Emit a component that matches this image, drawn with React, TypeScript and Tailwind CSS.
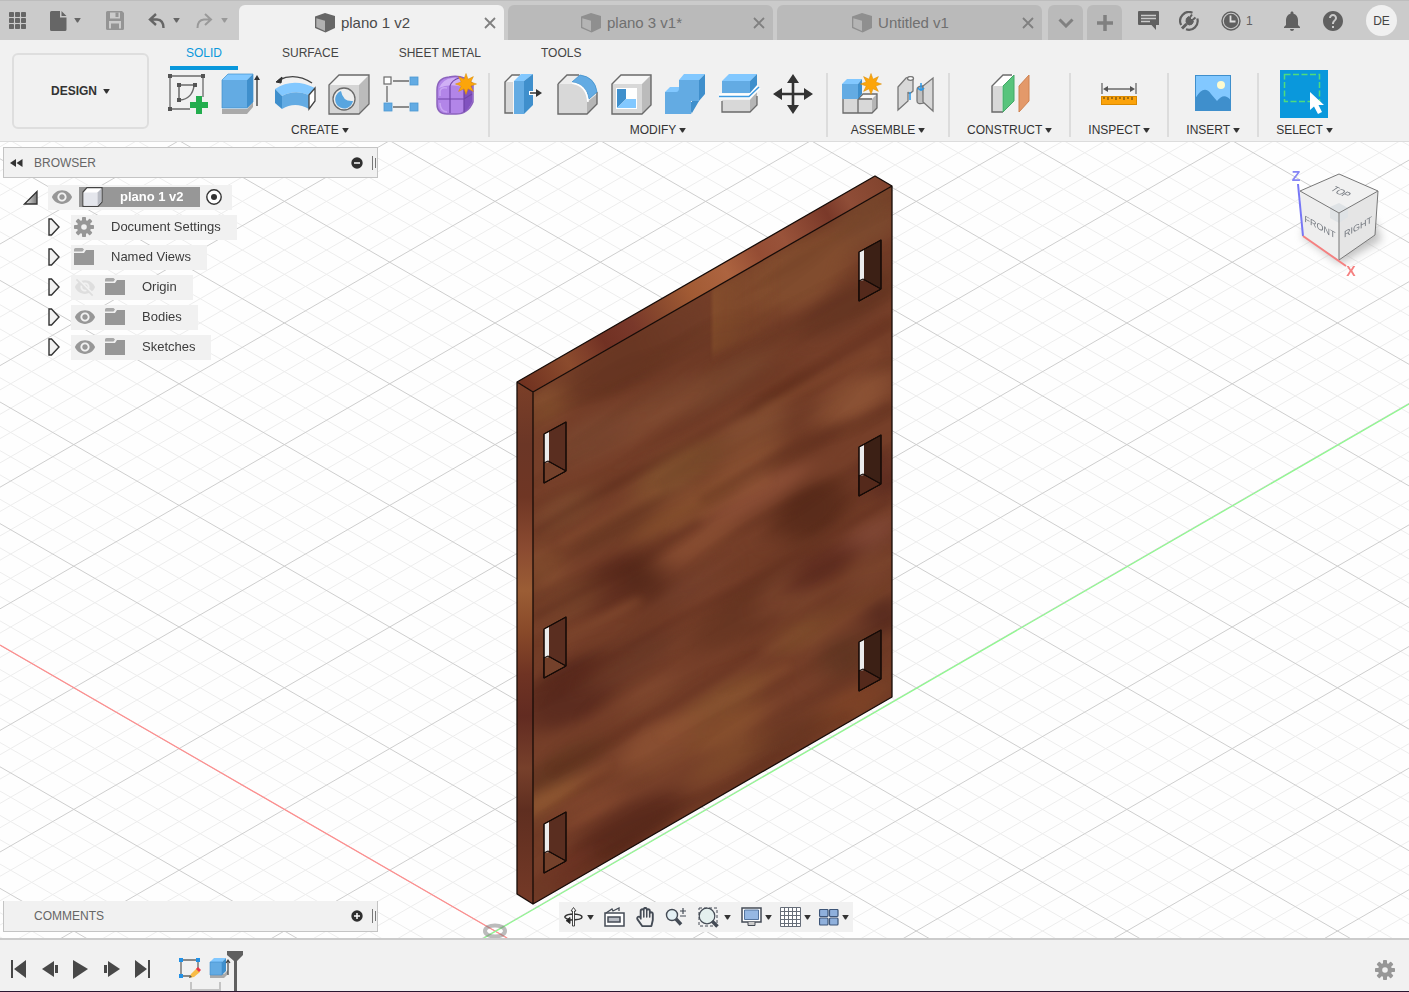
import React from "react";
import { MdHelp, MdNotifications, MdVisibility, MdVisibilityOff } from "react-icons/md";
import { FaRegHandPaper } from "react-icons/fa";

type Kids = { children: React.ReactNode };

function Caret({ className = "text-[#333]" }: { className?: string }) {
  return (
    <svg width="7" height="5" viewBox="0 0 8 6" className={className} aria-hidden="true">
      <path d="M0 0H8L4.6 5.4H3.4Z" fill="currentColor" />
    </svg>
  );
}

/* ---------- Title bar ---------- */

function DocCube({ active }: { active: boolean }) {
  const dark = active ? "#666" : "#8f8f8f";
  const light = active ? "#b0b0b0" : "#b4b4b4";
  return (
    <svg width="20" height="20" viewBox="0 0 20 20" aria-hidden="true">
      <path d="M0 3.500 10 0l10 3v12l-9.500 4.500L0 15Z" fill={dark} />
      <path d="M1.300 5.200 10 7.800V18L1.300 13.900Z" fill={light} />
    </svg>
  );
}

function DocTab({ name, active = false }: { name: string; active?: boolean }) {
  return (
    <div
      className={
        active
          ? "relative flex h-[35px] min-w-0 max-w-[265px] flex-1 items-center justify-center rounded-t-md bg-[#f1f1f1] pr-[18px] text-[#4a4a4a]"
          : "relative flex h-[35px] min-w-0 max-w-[265px] flex-1 items-center justify-center rounded-t-md bg-[#bababa] pr-[18px] text-[#707070]"
      }
    >
      <button className="flex items-center gap-1.5 text-[15px] leading-5 whitespace-nowrap">
        <DocCube active={active} />
        {name}
      </button>
      <button aria-label={"Close " + name} className="absolute right-2 flex h-5 w-3 items-center justify-center text-[#808080]">
        <svg width="12" height="12" viewBox="0 0 12 12" aria-hidden="true">
          <path d="M1 1 11 11M11 1 1 11" stroke="currentColor" strokeWidth="1.800" />
        </svg>
      </button>
    </div>
  );
}

function TitleBar() {
  return (
    <header className="flex h-10 shrink-0 items-end border-t border-[#bdbdbd] bg-[#cbcbcb]">
      <div className="flex h-full w-[239px] shrink-0 items-center pl-2 text-[#666]">
        <button aria-label="Data panel">
          <svg width="20" height="20" viewBox="0 0 20 20" aria-hidden="true" fill="currentColor">
            {[1, 7, 13].map((x) => [1, 7, 13].map((y) => <rect key={x + "-" + y} x={x} y={y} width="5" height="5" rx=".8" />))}
          </svg>
        </button>
        <button aria-label="File" className="ml-5 flex items-center gap-1.5">
          <svg width="20" height="20" viewBox="0 0 20 20" aria-hidden="true" fill="currentColor">
            <path d="M2 1.500Q2 0 3.500 0H12V6.500H18.500V18.500Q18.500 20 17 20H3.500Q2 20 2 18.500ZM13.500 0 18.500 5H13.500Z" />
          </svg>
          <Caret className="text-[#666]" />
        </button>
        <button aria-label="Save" className="ml-[25px] text-[#949494]">
          <svg width="18" height="19" viewBox="0 0 18 19" aria-hidden="true" fill="currentColor">
            <path fillRule="evenodd" d="M1.500 0H16L18 2V17.500Q18 19 16.500 19H1.500Q0 19 0 17.500V1.500Q0 0 1.500 0ZM4 1.500V7.500H14V1.500ZM3 10V17.500H5V12.500H13V17.500H15V10Z" />
            <rect x="9.500" y="1.500" width="3" height="4.500" />
            <rect x="6" y="14" width="2.500" height="3.500" />
          </svg>
        </button>
        <button aria-label="Undo" className="ml-6 flex items-center gap-2">
          <svg width="17" height="16" viewBox="0 0 17 16" aria-hidden="true">
            <path d="M8 1 2 6.500 8 12M2 6.500H9Q15.500 7 15.500 15" fill="none" stroke="currentColor" strokeWidth="2.400" />
          </svg>
          <Caret className="text-[#666]" />
        </button>
        <button aria-label="Redo" className="ml-4 flex items-center gap-2 text-[#999]">
          <svg width="17" height="16" viewBox="0 0 17 16" aria-hidden="true">
            <path d="M9 1 15 6.500 9 12M15 6.500H8Q1.500 7 1.500 15" fill="none" stroke="currentColor" strokeWidth="2" />
          </svg>
          <Caret className="text-[#999]" />
        </button>
      </div>
      <nav className="flex min-w-0 flex-1 items-end gap-1" aria-label="Documents">
        <DocTab name="plano 1 v2" active />
        <DocTab name="plano 3 v1*" />
        <DocTab name="Untitled v1" />
        <button aria-label="All documents" className="ml-0.5 flex h-[35px] w-[35px] shrink-0 items-center justify-center rounded-t-md bg-[#bababa] text-[#808080]">
          <svg width="16" height="10" viewBox="0 0 16 10" aria-hidden="true">
            <path d="M1.500 1.500 8 8 14.500 1.500" fill="none" stroke="currentColor" strokeWidth="3" />
          </svg>
        </button>
        <button aria-label="New design" className="flex h-[35px] w-[35px] shrink-0 items-center justify-center rounded-t-md bg-[#bababa] text-[#808080]">
          <svg width="16" height="16" viewBox="0 0 16 16" aria-hidden="true">
            <path d="M8 0V16M0 8H16" stroke="currentColor" strokeWidth="3.500" />
          </svg>
        </button>
      </nav>
      <div className="flex h-full w-[285px] shrink-0 items-center pr-3 pl-3.5 text-[#606060]">
        <button aria-label="Comments">
          <svg width="21" height="19" viewBox="0 0 21 19" aria-hidden="true">
            <path d="M1 0H20Q21 0 21 1V14H18V19L13.500 14H1Q0 14 0 13V1Q0 0 1 0Z" fill="currentColor" />
            <path d="M3 4.500H18M3 7.500H18M3 10.500H12" stroke="#cbcbcb" strokeWidth="1.300" />
          </svg>
        </button>
        <button aria-label="Extensions" className="ml-5">
          <svg width="20" height="20" viewBox="0 0 20 20" aria-hidden="true" fill="none" stroke="currentColor">
            <path d="M13.500 1.800A8.800 8.800 0 0 0 2.200 14M18.300 7.500A8.800 8.800 0 0 1 7 18.300" strokeWidth="2.200" />
            <path d="M3 17.500 7.500 13" strokeWidth="3" />
            <path d="M7 10.500Q6.500 7 9.500 5.500L14.500 10.500Q13.500 14 10.500 14Q7 13.500 7 10.500Z" fill="currentColor" strokeWidth="1" />
            <path d="M10.500 7 13 3.500M13 9.500 16.500 6.500" strokeWidth="2" />
          </svg>
        </button>
        <button aria-label="Job status, 1" className="ml-[22px] flex items-center gap-[5px] text-xs">
          <svg width="20" height="20" viewBox="0 0 20 20" aria-hidden="true">
            <circle cx="10" cy="10" r="9" fill="none" stroke="currentColor" strokeWidth="1.400" />
            <circle cx="10" cy="10" r="7.200" fill="currentColor" />
            <path d="M9.500 4.500V10.500H14.500" fill="none" stroke="#e0e0e0" strokeWidth="1.800" />
          </svg>
          1
        </button>
        <button aria-label="Notifications" className="ml-[27px]">
          <MdNotifications size={24} />
        </button>
        <button aria-label="Help" className="ml-[17px]">
          <MdHelp size={24} />
        </button>
        <button aria-label="Account DE" className="ml-auto flex h-[31px] w-[31px] items-center justify-center rounded-full bg-[#f0f0f0] text-xs text-[#444]">
          DE
        </button>
      </div>
    </header>
  );
}

/* ---------- Ribbon icons ---------- */

function Ico({ children }: Kids) {
  return (
    <svg width="40" height="40" viewBox="0 0 40 40" className="overflow-visible" aria-hidden="true">
      {children}
    </svg>
  );
}

function Burst({ x, y }: { x: number; y: number }) {
  const pts = Array.from({ length: 16 }, (_, i) => {
    const r = i % 2 ? 5.2 : 10.5;
    const a = (i * Math.PI) / 8;
    return (x + r * Math.sin(a)).toFixed(1) + "," + (y - r * Math.cos(a)).toFixed(1);
  }).join(" ");
  return <polygon points={pts} fill="#fca50a" stroke="#d98a00" strokeWidth=".5" />;
}

const B = "#63abe3";
const BL = "#82c8ff";
const BD = "#3f8fcc";
const G = "#d8d8d8";
const GE = "#6a6a6a";

const SketchIcon = () => (
  <Ico>
    <path d="M5 4V34M7 2H37M38 4V23M7 35H25" stroke={GE} strokeWidth="1.300" />
    <path d="M14 13V24M16 11H28M29 12Q27 25 15 26" fill="none" stroke={GE} strokeWidth="1.500" />
    <g fill="#555">
      {[[3, 0], [36, 0], [3, 33], [12, 9], [28, 9], [12, 24]].map(([x, y]) => (
        <rect key={x + "," + y} x={x} y={y} width="4" height="4" />
      ))}
    </g>
    <path d="M31 22H37V28H43V34H37V40H31V34H25V28H31Z" fill="#23ad4e" />
  </Ico>
);
const ExtrudeIcon = () => (
  <Ico>
    <path d="M3 35H28L34 28V33L28 40H3Z" fill="#aaa" />
    <path d="M3 6 9 0H34L28 6Z" fill={BL} />
    <path d="M28 6 34 0V28L28 34Z" fill={BD} />
    <path d="M3 6H28V34H3Z" fill={B} />
    <path d="M3 6 9 0H34V28L28 34H3Z" fill="none" stroke={BD} strokeWidth=".7" />
    <path d="M38 4V32" stroke="#333" strokeWidth="1.300" />
    <path d="M38 1 41 6H35Z" fill="#333" />
  </Ico>
);
const RevolveIcon = () => (
  <Ico>
    <path d="M6 6Q22-2 39 9" fill="none" stroke="#444" strokeWidth="1.400" />
    <path d="M3 8 9 3 8 9Z" fill="#333" stroke="#333" />
    <path d="M2 15Q20 3 42 14L36 21Q22 15 9 22Z" fill={BL} />
    <path d="M2 15 9 22V35L2 29Z" fill={BD} />
    <path d="M9 22Q22 15 36 21V35Q22 27 9 35Z" fill={B} />
    <path d="M36 21 42 14V27L36 35Z" fill="#fff" stroke="#444" strokeWidth="1.300" />
  </Ico>
);
const HoleIcon = () => (
  <Ico>
    <path d="M2 11 12 1H42L32 11Z" fill="#f6f6f6" />
    <path d="M32 11 42 1V30L32 40Z" fill="#bbb" />
    <path d="M2 11H32V40H2Z" fill="#d5d5d5" />
    <path d="M2 11 12 1H42V30L32 40H2Z" fill="none" stroke={GE} strokeWidth="1.300" />
    <circle cx="17" cy="25" r="11" fill="#eee" stroke={GE} strokeWidth="1.300" />
    <path d="M14 17A9 9 0 1 0 26 27Q16 28 14 17Z" fill="#58a5df" />
  </Ico>
);
const PatternIcon = () => (
  <Ico>
    <path d="M12 7H28M6 12V28M12 33H28" stroke={GE} strokeWidth="1.300" />
    <rect x="3" y="3" width="7" height="7" fill="#fff" stroke={GE} strokeWidth="1.200" />
    <g fill={B} stroke="#4c98d3" strokeWidth=".8">
      <rect x="29" y="3" width="8" height="8" />
      <rect x="3" y="29" width="8" height="8" />
      <rect x="29" y="29" width="8" height="8" />
    </g>
  </Ico>
);
const FormIcon = () => (
  <Ico>
    <path d="M2 16Q2 4 14 3Q28 0 38 10V28Q33 40 21 40H12Q2 40 2 30Z" fill="#b285e8" stroke="#8c63bd" strokeWidth="1.500" />
    <path d="M4 14Q8 5 17 4Q28 3 30 8L28 13Q14 9 4 14Z" fill="#d0b0f5" />
    <path d="M29 14 37 10V28Q34 35 29 38Z" fill="#8152bf" />
    <path d="M15 12V39M3 25H29L37 20M15 12Q17 6 24 4M29 14V38" fill="none" stroke="#7145a8" strokeWidth="1.200" />
    <path d="M5 29Q5 37 12 38M5 22V17Q6 13 12 14" fill="none" stroke="#c8a5f2" strokeWidth="1.500" />
    <Burst x={31} y={10} />
  </Ico>
);
const PressPullIcon = () => (
  <Ico>
    <path d="M2 8 9 1H18V39H2Z" fill="#f7f7f7" />
    <path d="M2 8H10V39H2Z" fill={G} />
    <path d="M10 39H2V8L9 1H17" fill="none" stroke={GE} strokeWidth="1.400" />
    <path d="M11 7 18 0H30L21 7Z" fill={BL} />
    <path d="M21 7 30 0V31L21 40Z" fill={BD} />
    <path d="M11 7H21V40H11Z" fill={B} />
    <path d="M26 19H34" stroke="#fff" strokeWidth="4" />
    <path d="M27 19H35" stroke="#333" strokeWidth="1.500" />
    <path d="M33 15 39 19 33 23Z" fill="#333" />
  </Ico>
);
const FilletIcon = () => (
  <Ico>
    <path d="M1 10 10 1H22L40 20V30L30 40H1Z" fill="#ededed" />
    <path d="M1 10H15Q29 12 30 28V40H1Z" fill={G} />
    <path d="M30 28 40 20V30L30 40Z" fill="#b5b5b5" />
    <path d="M1 10 10 1H22M1 10V40H30L40 30V18" fill="none" stroke={GE} strokeWidth="1.400" />
    <path d="M15 8 23 1Q38 3 40 18L32 25Q30 10 15 8Z" fill={B} stroke={BD} strokeWidth=".8" />
    <path d="M15 9Q30 11 31 28" fill="none" stroke="#fff" strokeWidth="1.500" />
  </Ico>
);
const ShellIcon = () => (
  <Ico>
    <path d="M1 10 10 1H40L31 10Z" fill="#f7f7f7" />
    <path d="M31 10 40 1V31L31 40Z" fill="#bbb" />
    <path d="M1 10H31V40H1Z" fill={G} />
    <path d="M1 10 10 1H40V31L31 40H1Z" fill="none" stroke={GE} strokeWidth="1.400" />
    <rect x="5" y="14" width="21" height="21" fill="#fff" />
    <path d="M6 15H15V25L6 34Z" fill={BD} />
    <path d="M6 34 15 25H25V34Z" fill={BL} />
  </Ico>
);
const CombineIcon = () => (
  <Ico>
    <path d="M0 18 5 13H14V6L19 0H40L34 6L27 18Z" fill={BL} />
    <path d="M34 6 40 0V20L34 27ZM27 27H34L27 39Z" fill={BD} />
    <path d="M0 18H11Q14 18 14 14V6H34V27H26V40H0Z" fill={B} />
    <path d="M26 28 34 27 28 31V35L26 40Z" fill={BD} />
  </Ico>
);
const SplitIcon = () => (
  <Ico>
    <path d="M3 26H31L38 18V31L31 38H3Z" fill={G} />
    <path d="M31 26 38 18V31L31 38Z" fill="#b5b5b5" />
    <path d="M3 27V38H31L38 31V22" fill="none" stroke={GE} strokeWidth="1.300" />
    <path d="M0 22H30L40 13" fill="none" stroke="#fff" strokeWidth="5" />
    <path d="M0 22.500H30L40 13" fill="none" stroke="#3f9ae0" strokeWidth="1.500" />
    <path d="M3 7 10 0H38L31 7Z" fill={BL} />
    <path d="M31 7 38 0V11L31 19Z" fill={BD} />
    <path d="M3 7H31V19H3Z" fill={B} />
  </Ico>
);
const MoveIcon = () => (
  <Ico>
    <path d="M20 5V35M5 20H35" stroke="#333" strokeWidth="2.600" />
    <path d="M20 0 26 9H14ZM20 40 26 31H14ZM0 20 9 14V26ZM40 20 31 14V26Z" fill="#333" />
  </Ico>
);
const ComponentIcon = () => (
  <Ico>
    <path d="M17 25 22 20H36L31 25Z" fill="#f7f7f7" />
    <path d="M31 25 36 20V34L31 39Z" fill="#b5b5b5" />
    <path d="M2 24H31V39H2Z" fill={G} />
    <path d="M2 24V39H31L36 34V20H22L17 25V39M17 25H31" fill="none" stroke={GE} strokeWidth="1.300" />
    <path d="M1 10 6 5H21L17 10Z" fill={BL} />
    <path d="M17 10 21 5V20L17 25Z" fill={BD} />
    <path d="M1 10H17V25H1Z" fill={B} />
    <Burst x={30} y={10} />
  </Ico>
);
const JointIcon = () => (
  <Ico>
    <g stroke="#777" strokeWidth="1.300">
      <path d="M3 13 11 4 14 3Q19 2 18 6V17Q14 21 13 18V27L3 36Z" fill={G} />
      <ellipse cx="15.500" cy="4.500" rx="3" ry="1.800" fill="#fff" />
      <path d="M28 12Q22 12 22 16V27Q22 31 29 29Z" fill="#c0c0c0" />
      <path d="M28 12V28L38 37V4Z" fill={G} />
    </g>
    <path d="M15 18V26M26 9V17M23 14Q26 18 29 14" fill="none" stroke="#2b98e8" strokeWidth="1.500" />
  </Ico>
);
const PlaneIcon = () => (
  <Ico>
    <path d="M2 12 13 0H24L13 12V38H2Z" fill="#fff" />
    <path d="M2 12H12V38H2Z" fill={G} />
    <path d="M13 38H2V12L13 1H22" fill="none" stroke={GE} strokeWidth="1.400" />
    <path d="M13 12 24 1V27L13 38Z" fill="#58c47c" stroke="#42a866" />
    <path d="M29 12 39 1V27L29 38Z" fill="#e3996a" stroke="#cf8250" />
  </Ico>
);
const MeasureIcon = () => (
  <Ico>
    <path d="M3 9V20M37 9V20M6 15H34" stroke={GE} strokeWidth="1.300" />
    <path d="M4 15 9 12V18ZM36 15 31 12V18Z" fill="#555" />
    <rect x="2.500" y="22.500" width="35" height="8" fill="#fba30b" stroke="#db8a00" />
    {[5, 9, 13, 17, 21, 25, 29, 33].map((x, i) => (
      <path key={x} d={i % 2 ? "M" + x + " 23V26" : "M" + x + " 23V25"} stroke="#6b4a12" strokeWidth="1.200" />
    ))}
  </Ico>
);
const ImageIcon = () => (
  <Ico>
    <rect x="2.500" y="1.500" width="35" height="35" fill="#82c8ff" />
    <path d="M2.500 24Q11 10 18 20L24 27Q31 18 37.500 26V36.500H2.500Z" fill={BD} />
    <circle cx="28" cy="11" r="4" fill="#fdfbcf" />
    <rect x="2.500" y="1.500" width="35" height="35" fill="none" stroke="#3f8fcc" />
  </Ico>
);

function Tool({ label, children }: Kids & { label: string }) {
  return (
    <button aria-label={label} className="flex h-10 w-10 items-center justify-center">
      {children}
    </button>
  );
}

const GROUP_STYLE = {
  wide: "flex h-16 flex-col items-center border-r-2 border-[#dcdcdc] px-[13px]",
  single: "flex h-16 flex-col items-center border-r-2 border-[#dcdcdc] px-[17px]",
  last: "flex h-16 flex-col items-center px-[17px]",
};

function Group({ label, children, kind = "wide" }: Kids & { label: string; kind?: "wide" | "single" | "last" }) {
  return (
    <section className={GROUP_STYLE[kind]}>
      <div className="-mt-[3px] flex h-12 shrink-0 items-center gap-3.5">{children}</div>
      <button className="mt-0.5 flex h-5 shrink-0 items-center gap-[3px] text-xs leading-5 whitespace-nowrap text-[#333]">
        {label}
        <Caret />
      </button>
    </section>
  );
}

function Ribbon() {
  return (
    <div className="flex h-[102px] shrink-0 border-b border-[#dcdcdc] bg-[#f1f1f1]">
      <button className="mt-[13px] mr-[3px] ml-3 flex h-[76px] w-[137px] shrink-0 items-center justify-center gap-1.5 rounded-md border-2 border-[#dedede] text-xs font-bold text-[#333]">
        DESIGN
        <Caret />
      </button>
      <div className="flex min-w-0 flex-1 flex-col">
        <nav className="flex h-[30px] gap-7 pl-[18px] text-xs text-[#444]" aria-label="Workspace tabs">
          <button className="border-b-4 border-[#0a98dc] px-4 text-[#0a98dc]">SOLID</button>
          <button className="border-b-4 border-transparent px-4">SURFACE</button>
          <button className="border-b-4 border-transparent px-4">SHEET METAL</button>
          <button className="border-b-4 border-transparent px-4">TOOLS</button>
        </nav>
        <div className="flex pt-[3px]">
          <Group label="CREATE">
            <Tool label="Create sketch"><SketchIcon /></Tool>
            <Tool label="Extrude"><ExtrudeIcon /></Tool>
            <Tool label="Revolve"><RevolveIcon /></Tool>
            <Tool label="Hole"><HoleIcon /></Tool>
            <Tool label="Pattern"><PatternIcon /></Tool>
            <Tool label="Create form"><FormIcon /></Tool>
          </Group>
          <Group label="MODIFY">
            <Tool label="Press pull"><PressPullIcon /></Tool>
            <Tool label="Fillet"><FilletIcon /></Tool>
            <Tool label="Shell"><ShellIcon /></Tool>
            <Tool label="Combine"><CombineIcon /></Tool>
            <Tool label="Split body"><SplitIcon /></Tool>
            <Tool label="Move"><MoveIcon /></Tool>
          </Group>
          <Group label="ASSEMBLE">
            <Tool label="New component"><ComponentIcon /></Tool>
            <Tool label="Joint"><JointIcon /></Tool>
          </Group>
          <Group label="CONSTRUCT" kind="single">
            <Tool label="Offset plane"><PlaneIcon /></Tool>
          </Group>
          <Group label="INSPECT" kind="single">
            <Tool label="Measure"><MeasureIcon /></Tool>
          </Group>
          <Group label="INSERT" kind="single">
            <Tool label="Insert image"><ImageIcon /></Tool>
          </Group>
          <Group label="SELECT" kind="last">
            <button aria-label="Window selection" className="h-12 w-12 bg-[#0a98dc]">
              <svg width="48" height="48" viewBox="0 0 48 48" aria-hidden="true">
                <rect x="4.500" y="4.500" width="35" height="27" fill="none" stroke="#4fdc7c" strokeWidth="1.500" strokeDasharray="6 2.500" />
                <path d="M30 22V40L34 36.500 38 44 42 42 38.500 35H44Z" fill="#fff" />
              </svg>
            </button>
          </Group>
        </div>
      </div>
    </div>
  );
}

/* ---------- Model scene ---------- */

const ORIGIN = { x: 495, y: 931 };
const SLOPE = 0.5774;
const STEP = 24.32;

function Grid() {
  const minor: string[] = [];
  const major: string[] = [];
  for (let k = -75; k <= 75; k++) {
    for (const s of [-1, 1]) {
      const y0 = ORIGIN.y + k * STEP - s * SLOPE * ORIGIN.x;
      const d = "M0 " + y0.toFixed(1) + "L1409 " + (y0 + s * SLOPE * 1409).toFixed(1);
      (k % 5 === 0 ? major : minor).push(d);
    }
  }
  return (
    <g fill="none">
      <path d={minor.join("")} stroke="#ededed" />
      <path d={major.join("")} stroke="#cecece" />
    </g>
  );
}

/* cx, cy, rx, ry, colour */
const GRAIN: [number, number, number, number, string][] = [
  [627, 360, 70, 26, "#683622"], [685, 322, 30, 30, "#6f3c27"], [800, 272, 60, 32, "#834e2f"],
  [867, 215, 34, 30, "#7c4a2f"], [850, 305, 60, 20, "#683724"], [745, 352, 60, 8, "#6c3a25"],
  [720, 385, 60, 14, "#7c4930"], [852, 400, 44, 20, "#8d5335"], [753, 427, 36, 22, "#8a5335"],
  [777, 393, 44, 6, "#66341f"], [650, 413, 70, 18, "#804a31"], [590, 440, 44, 20, "#7a4730"],
  [545, 405, 24, 18, "#85502f"], [677, 470, 50, 20, "#80502e"], [750, 463, 40, 24, "#8b5233"],
  [805, 447, 44, 12, "#693622"], [812, 510, 44, 24, "#582a1a"], [884, 475, 16, 26, "#5d2b21"],
  [757, 495, 60, 11, "#8c4f36"], [683, 510, 60, 13, "#8a5230"], [617, 527, 54, 12, "#6a3a24"],
  [567, 510, 34, 16, "#7f4d31"], [873, 536, 28, 16, "#804735"], [697, 543, 48, 12, "#874c31"],
  [612, 583, 44, 22, "#5e2c1e"], [645, 580, 20, 24, "#54281a"], [690, 588, 34, 16, "#79432d"],
  [570, 602, 36, 18, "#76422a"], [542, 568, 18, 24, "#875131"], [747, 612, 64, 24, "#683622"],
  [792, 590, 36, 22, "#7d472f"], [822, 566, 38, 16, "#602e20"], [872, 572, 30, 14, "#7f4830"],
  [884, 615, 20, 18, "#53281d"], [845, 655, 26, 20, "#613622"], [806, 632, 36, 14, "#824f2d"],
  [850, 608, 44, 8, "#7d472b"], [570, 692, 56, 30, "#5a2a1e"], [630, 660, 50, 18, "#6d3b28"],
  [650, 695, 32, 14, "#80482f"], [720, 702, 56, 14, "#83502d"], [660, 747, 46, 24, "#8b5032"],
  [728, 728, 44, 14, "#87502d"], [845, 710, 48, 16, "#7f4528"], [785, 740, 48, 14, "#6a3824"],
  [545, 800, 44, 11, "#8c5530"], [590, 806, 40, 12, "#884b31"], [622, 832, 70, 22, "#5c2b1d"],
  [728, 758, 44, 12, "#7e492a"], [565, 765, 48, 14, "#683b23"], [570, 870, 30, 18, "#733927"],
];

const HOLES: [number, number][] = [
  [544, 434], [544, 629], [544, 824], [859, 252], [859, 447], [859, 642],
];

function Board() {
  return (
    <g strokeLinejoin="round">
      <defs>
        <clipPath id="face">
          <path d="M533 392 892 186V697L533 904Z" />
        </clipPath>
        <filter id="soft" x="-30%" y="-30%" width="160%" height="160%" colorInterpolationFilters="sRGB">
          <feGaussianBlur stdDeviation="14 6" />
        </filter>
        <filter id="streak" x="-10%" y="-10%" width="120%" height="120%" colorInterpolationFilters="sRGB">
          <feGaussianBlur stdDeviation="4" />
        </filter>
        <filter id="fibre" x="0" y="0" width="100%" height="100%" colorInterpolationFilters="sRGB">
          <feTurbulence type="fractalNoise" baseFrequency=".006 .04" numOctaves="2" seed="7" />
          <feColorMatrix values="0 0 0 0 .22  0 0 0 0 .09  0 0 0 0 .05  2.4 0 0 0 -1" />
        </filter>
        <linearGradient id="topEdge" gradientUnits="userSpaceOnUse" x1="525" y1="387" x2="884" y2="180">
          <stop offset="0" stopColor="#713220" />
          <stop offset=".12" stopColor="#8b4b2d" />
          <stop offset=".17" stopColor="#803f2a" />
          <stop offset=".22" stopColor="#713123" />
          <stop offset=".3" stopColor="#79382a" />
          <stop offset=".38" stopColor="#8a4a2e" />
          <stop offset=".46" stopColor="#a25b34" />
          <stop offset=".56" stopColor="#ad6440" />
          <stop offset=".65" stopColor="#954d34" />
          <stop offset=".72" stopColor="#99533a" />
          <stop offset=".84" stopColor="#7a3929" />
          <stop offset=".9" stopColor="#8f4d37" />
          <stop offset="1" stopColor="#82442e" />
        </linearGradient>
        <linearGradient id="sideEdge" gradientUnits="userSpaceOnUse" x1="517" y1="382" x2="527" y2="904">
          <stop offset="0" stopColor="#7b3f28" />
          <stop offset=".12" stopColor="#6b3626" />
          <stop offset=".22" stopColor="#6f3624" />
          <stop offset=".32" stopColor="#8b4b31" />
          <stop offset=".4" stopColor="#9b5d35" />
          <stop offset=".48" stopColor="#884929" />
          <stop offset=".56" stopColor="#6f3323" />
          <stop offset=".64" stopColor="#622b21" />
          <stop offset=".74" stopColor="#77402b" />
          <stop offset=".82" stopColor="#5f2e20" />
          <stop offset="1" stopColor="#753a27" />
        </linearGradient>
        <linearGradient id="patch" x1="0" y1="0" x2="1" y2="0">
          <stop offset="0" stopColor="#88522e" stopOpacity=".8" />
          <stop offset="1" stopColor="#85502e" stopOpacity="0" />
        </linearGradient>
        <filter id="seam" x="-10%" y="-10%" width="120%" height="120%" colorInterpolationFilters="sRGB">
          <feGaussianBlur stdDeviation="1.5 4" />
        </filter>
      </defs>
      <path d="M533 392 892 186V697L533 904Z" fill="#763f29" />
      <g clipPath="url(#face)">
        <g transform="rotate(-29)">
          <g filter="url(#soft)">
            {GRAIN.map(([x, y, rx, ry, c], i) => (
              <ellipse key={i} rx={rx} ry={ry} fill={c} opacity=".9" transform={"rotate(29) translate(" + x + " " + y + ") rotate(-31)"} />
            ))}
          </g>
        </g>
        <path d="M712 288 780 249V325L712 355Z" fill="url(#patch)" filter="url(#seam)" />
        <g filter="url(#streak)" fill="none" strokeWidth="5" opacity=".5">
          <path d="M533 532 640 470 780 392 892 322M533 618 620 572 700 520M533 702 640 640 770 570 892 500M550 772 660 712 760 650" stroke="#552619" />
          <path d="M700 500 790 450 892 404M600 850 720 790 850 715" stroke="#5c2c1c" />
          <path d="M560 545 660 488M760 410 880 350M660 735 790 665M535 805 610 765M670 530 770 480M560 640 640 600" stroke="#955a36" />
        </g>
        <g transform="translate(712 545) rotate(-30)">
          <rect x="-420" y="-420" width="840" height="840" filter="url(#fibre)" opacity=".14" />
        </g>
      </g>
      <path d="M517 382 875 176 892 186 533 392Z" fill="url(#topEdge)" />
      <path d="M517 382 533 392V904L517 894Z" fill="url(#sideEdge)" />
      <g fill="none" stroke="#160b07" strokeWidth="1.300">
        <path d="M517 382 875 176 892 186V697L533 904 517 894ZM517 382 533 392 892 186M533 392V904" />
      </g>
      {HOLES.map(([x, y]) => (
        <g key={x + "-" + y} transform={"translate(" + x + " " + y + ")"} stroke="#160b07">
          <path d="M0 0 22-12V37L0 49Z" fill={x > 700 ? "#3c2015" : "#5a2e20"} />
          <path d="M0 49V28L4 27 22 37Z" fill={x > 700 ? "#54291b" : "#74412b"} />
          <path d="M.5 0 5-2V28L.5 29Z" fill="#ececec" stroke="none" />
          <path d="M0 0 22-12V37L0 49ZM4 27 22 37M0 29 4 27" fill="none" strokeWidth="1.200" />
        </g>
      ))}
    </g>
  );
}

function Scene() {
  return (
    <svg
      className="absolute inset-0 h-full w-full bg-[#fefefe]"
      viewBox="0 142 1409 796"
      preserveAspectRatio="xMidYMid slice"
      role="img"
      aria-label="Wooden panel model"
    >
      <Grid />
      <path d="M0 645 507 938" stroke="#ff8d8d" strokeWidth="1.200" />
      <path d="M484 938 1409 404" stroke="#8dfa8d" strokeWidth="1.200" />
      <ellipse cx="495" cy="931" rx="10" ry="5.500" fill="none" stroke="#777" strokeOpacity=".5" strokeWidth="4" />
      <Board />
    </svg>
  );
}

function ViewCube() {
  return (
    <svg width="110" height="120" viewBox="1285 162 110 120" className="mt-5 mr-3.5" role="img" aria-label="View cube">
      <defs>
        <filter id="cubeShadow" x="-30%" y="-30%" width="160%" height="160%">
          <feGaussianBlur stdDeviation="4" />
        </filter>
      </defs>
      <path d="M1302 236 1340 264 1382 240 1374 220 1310 220Z" fill="#888" opacity=".5" filter="url(#cubeShadow)" />
      <path d="M1300 191 1339 174 1378 191 1339 213Z" fill="#f1f1f1" />
      <path d="M1300 191 1339 213V260L1303 236Z" fill="#eeeeee" />
      <path d="M1339 213 1378 191 1375 235 1339 260Z" fill="#e5e5e5" />
      <path d="M1330 207 1339 203 1348 208V217L1339 223 1330 218Z" fill="#dfe3e6" />
      <g fill="none" stroke="#777">
        <path d="M1300 191 1339 174 1378 191 1375 235 1339 260V213M1300 191 1339 213 1378 191" />
      </g>
      <g fontFamily="Liberation Sans, sans-serif" fill="#70757c" textAnchor="middle">
        <text transform="translate(1338 194) rotate(25) skewX(-30)" fontSize="9">TOP</text>
        <text transform="translate(1320 230) skewY(29)" fontSize="9">FRONT</text>
        <text transform="translate(1358 230) skewY(-29)" fontSize="9">RIGHT</text>
      </g>
      <path d="M1298 184 1303 236" stroke="#7777f5" strokeWidth="2" />
      <path d="M1303 236 1346 266" stroke="#f58080" strokeWidth="2" />
      <g fontFamily="Liberation Sans, sans-serif" fontSize="14" fontWeight="bold" textAnchor="middle">
        <text x="1296" y="181" fill="#8585f5">Z</text>
        <text x="1351" y="276" fill="#f58080">X</text>
      </g>
    </svg>
  );
}

/* ---------- Browser panel ---------- */

function PanelBar({ title, open }: { title: string; open: boolean }) {
  return (
    <div
      className={
        open
          ? "flex h-[31px] w-[375px] items-center border border-[#c4c4c4] bg-[#f1f1f1] pr-px pl-1.5"
          : "flex h-[31px] w-[375px] items-center border border-t-0 border-[#c4c4c4] bg-[#f1f1f1] pr-px pl-1.5"
      }
    >
      <span className="w-6 text-[#333]">
        {open && (
          <svg width="13" height="8" viewBox="0 0 13 8" aria-hidden="true">
            <path d="M0 4 6 0V8ZM6.500 4 12.500 0V8Z" fill="currentColor" />
          </svg>
        )}
      </span>
      <h2 className="flex-1 text-xs text-[#666]">{title}</h2>
      <button aria-label={(open ? "Collapse " : "Expand ") + title}>
        <svg width="12" height="12" viewBox="0 0 12 12" aria-hidden="true">
          <circle cx="6" cy="6" r="5.700" fill="#2f2f2f" />
          <path d={open ? "M3 6H9" : "M3 6H9M6 3V9"} stroke="#fff" strokeWidth="1.500" />
        </svg>
      </button>
      <svg width="5" height="14" viewBox="0 0 5 14" className="ml-2" aria-hidden="true">
        <path d="M1.500 0V14M4.500 2V12" stroke="#777" />
      </svg>
    </div>
  );
}

function Gear() {
  return (
    <svg width="20" height="20" viewBox="0 0 20 20" className="text-[#979797]" aria-hidden="true">
      <g fill="currentColor">
        {[0, 45, 90, 135].map((a) => (
          <rect key={a} x="8" y="0" width="4" height="20" rx=".8" transform={"rotate(" + a + " 10 10)"} />
        ))}
        <circle cx="10" cy="10" r="7" />
      </g>
      <circle cx="10" cy="10" r="2.800" fill="#f1f1f1" />
    </svg>
  );
}

function Folder() {
  return (
    <svg width="20" height="18" viewBox="0 0 20 18" className="text-[#979797]" aria-hidden="true" fill="currentColor">
      <path d="M0 5H10L12 2H20V17H0Z" />
      <path d="M0 1.500Q0 0 1.500 0H8.500L10 1.500 8.500 3.500H0Z" opacity=".8" />
    </svg>
  );
}

function Expander() {
  return (
    <svg width="12" height="18" viewBox="0 0 12 18" aria-hidden="true">
      <path d="M1 1H3.500L11 9 3.500 17H1Z" fill="#f2f2f2" stroke="#333" strokeWidth="1.400" />
    </svg>
  );
}

function TreeRow({ label, eye }: { label: string; eye?: "on" | "off" | "gear" }) {
  return (
    <li className="flex h-[30px] items-center pl-[45px]">
      <button aria-label={"Expand " + label} className="flex w-[23px]">
        <Expander />
      </button>
      <div className="flex h-[25px] items-center bg-[#f1f1f1] pr-4 pl-[3px] text-[13px] leading-5 text-[#3c3c3c]">
        {eye === "on" && <MdVisibility size={22} className="mr-[9px] text-[#979797]" />}
        {eye === "off" && <MdVisibilityOff size={22} className="mr-[9px] text-[#dedede]" />}
        <span className="mr-[17px]">{eye === "gear" ? <Gear /> : <Folder />}</span>
        {label}
      </div>
    </li>
  );
}

function Browser() {
  return (
    <aside className="pt-[5px] pl-[3px]">
      <PanelBar title="BROWSER" open />
      <ul className="mt-1">
        <li className="flex h-[30px] items-center pl-5">
          <button aria-label="Collapse plano 1 v2" className="w-[25px]">
            <svg width="15" height="15" viewBox="0 0 15 15" aria-hidden="true">
              <defs>
                <linearGradient id="fold" x1="0" x2="1" y1="0" y2="0">
                  <stop stopColor="#eee" />
                  <stop offset="1" stopColor="#777" />
                </linearGradient>
              </defs>
              <path d="M1.500 14 14 1.500V14Z" fill="url(#fold)" stroke="#333" strokeWidth="1.300" />
            </svg>
          </button>
          <div className="flex h-[25px] items-center bg-[#f1f1f1] pr-2.5 pl-[3px]">
            <MdVisibility size={22} className="text-[#979797]" />
            <div className="mr-1.5 ml-1.5 flex h-5 items-center bg-[#979797] pr-4 pl-[3px] text-[13px] font-bold text-white">
              <svg width="22" height="20" viewBox="0 0 22 20" className="mr-4" aria-hidden="true">
                <path d="M1 5 5 .7H20V15L16 19.300H1Z" fill="#fff" stroke="#444" strokeWidth="1.200" />
                <path d="M1.600 5.500H15.500V18.700H1.600Z" fill="#e4e6ec" />
                <path d="M15.500 5.500 19.400 1.500V15L15.500 18.700Z" fill="#b9bcc4" />
              </svg>
              plano 1 v2
            </div>
            <button aria-label="Activate component">
              <svg width="16" height="16" viewBox="0 0 16 16" aria-hidden="true">
                <circle cx="8" cy="8" r="7.200" fill="#fff" stroke="#333" strokeWidth="1.400" />
                <circle cx="8" cy="8" r="3" fill="#333" />
              </svg>
            </button>
          </div>
        </li>
        <TreeRow label="Document Settings" eye="gear" />
        <TreeRow label="Named Views" />
        <TreeRow label="Origin" eye="off" />
        <TreeRow label="Bodies" eye="on" />
        <TreeRow label="Sketches" eye="on" />
      </ul>
    </aside>
  );
}

/* ---------- Navigation bar ---------- */

function NavButton({ label, menu = false, children }: Kids & { label: string; menu?: boolean }) {
  return (
    <button aria-label={label} className="flex items-center gap-[3px] text-[#444b55]">
      {children}
      {menu && <Caret />}
    </button>
  );
}

function NavBar() {
  return (
    <div className="flex h-[30px] items-center gap-2.5 bg-[#f1f1f1] px-1">
      <NavButton label="Orbit" menu>
        <svg width="21" height="20" viewBox="0 0 21 20" aria-hidden="true" fill="none" stroke="#333">
          <path d="M6 12.500Q1 11 2 9.500Q4 7 10.500 7Q19 7.500 19 10Q19 13 7 13" strokeWidth="1.500" />
          <path d="M9.500 19V4H8L10.500.5 13 4H11.500V19Z" fill="#fff" strokeWidth=".9" />
          <path d="M3 13.500 7 10.500V16.500Z" fill="#222" />
        </svg>
      </NavButton>
      <NavButton label="Look at">
        <svg width="21" height="20" viewBox="0 0 21 20" aria-hidden="true" fill="none" stroke="currentColor">
          <path d="M1 6H20V19H1Z" fill="#fff" strokeWidth="1.500" />
          <path d="M4 10H16V15H4Z" fill="#b8bcc4" strokeWidth="1.500" />
          <path d="M2 6 8 2 9 4 15 1V4" strokeWidth="1.300" />
        </svg>
      </NavButton>
      <NavButton label="Pan">
        <FaRegHandPaper size={20} />
      </NavButton>
      <NavButton label="Zoom">
        <svg width="22" height="20" viewBox="0 0 22 20" aria-hidden="true" fill="none" stroke="currentColor">
          <circle cx="7" cy="8" r="5.500" fill="#e4f0f4" strokeWidth="1.400" />
          <path d="M11 12 16 17.500" strokeWidth="3.500" />
          <path d="M18 1V7M15 4H21M15 9H21" strokeWidth="1.200" />
        </svg>
      </NavButton>
      <NavButton label="Fit" menu>
        <svg width="24" height="21" viewBox="0 0 24 21" aria-hidden="true" fill="none" stroke="currentColor">
          <path d="M2 1H20V19H2Z" strokeDasharray="3 2" />
          <circle cx="10" cy="9" r="7.800" fill="#e4f0ee" strokeWidth="1.200" />
          <path d="M15 14 20.500 19.500" strokeWidth="3.500" />
        </svg>
      </NavButton>
      <div className="flex items-center gap-2">
        <NavButton label="Display settings" menu>
          <svg width="21" height="20" viewBox="0 0 21 20" aria-hidden="true" fill="none" stroke="currentColor">
            <path d="M1 1H20V15H1Z" fill="#fff" strokeWidth="1.500" />
            <path d="M3.500 3H17.500V12.500H3.500Z" fill="#96b8e3" stroke="#54749e" />
            <path d="M7 15V18.500H14V15" fill="#ccc" />
          </svg>
        </NavButton>
        <NavButton label="Grid and snaps" menu>
          <svg width="21" height="20" viewBox="0 0 21 20" aria-hidden="true" stroke="#666d78">
            <path d="M.5.5H20.500V19.500H.5Z" fill="#fff" />
            <path d="M4.500 0V20M8.500 0V20M12.500 0V20M16.500 0V20M0 4.500H21M0 8.500H21M0 12.500H21M0 16.500H21" />
          </svg>
        </NavButton>
        <NavButton label="Viewports" menu>
          <svg width="20" height="17" viewBox="0 0 20 17" aria-hidden="true" fill="#8fb0dc" stroke="#3d5578">
            {[[0.5, 0.5], [10.5, 0.5], [0.5, 9], [10.5, 9]].map(([x, y]) => (
              <rect key={x + "-" + y} x={x} y={y} width="8.500" height="7" rx="1" strokeWidth="1.200" />
            ))}
          </svg>
        </NavButton>
      </div>
    </div>
  );
}

function Timeline() {
  const controls: [string, string][] = [
    ["Go to start", "M0 0H2V18H0ZM15 0V18L3 9Z"],
    ["Step back", "M12 1V17L0 9ZM13 5H16V13H13Z"],
    ["Play", "M0 0 15 9 0 19Z"],
    ["Step forward", "M4 1 16 9 4 17ZM0 5H3V13H0Z"],
    ["Go to end", "M0 0 12 9 0 18ZM13 0H15V18H13Z"],
  ];
  return (
    <footer className="flex h-[54px] shrink-0 items-center border-t-2 border-b border-t-[#cbcbcb] border-b-[#2a1730] bg-[#f1f1f1] pr-3.5 pl-[11px]">
      <div className="mt-2 flex gap-[15px] text-[#484848]">
        {controls.map(([label, d]) => (
          <button key={label} aria-label={label}>
            <svg width="16" height="19" viewBox="0 0 16 19" aria-hidden="true">
              <path d={d} fill="currentColor" />
            </svg>
          </button>
        ))}
      </div>
      <svg width="70" height="40" viewBox="177 951 70 40" className="ml-[26px] self-end" role="img" aria-label="Timeline: sketch, extrude">
        <path d="M182 960H197M181 962V975M198 962V970M182 976H190" stroke="#666" strokeWidth="1.300" />
        <g fill="#2291e6">
          <rect x="179" y="958" width="4" height="4" />
          <rect x="196" y="958" width="4" height="4" />
          <rect x="179" y="974" width="4" height="4" />
        </g>
        <path d="M189 978 191 974 197 968 200 972 194 977Z" fill="#f8bc47" />
        <path d="M196 969 198 967 201 970 199 972Z" fill="#e8354b" />
        <path d="M189 978 190 975 192 977Z" fill="#555" />
        <path d="M210 974H224L228 970V974L224 978H210Z" fill="#aaa" />
        <path d="M210 962 214 958H226L222 962Z" fill={BL} />
        <path d="M222 962 226 958V971L222 975Z" fill={BD} />
        <path d="M210 962H222V975H210Z" fill={B} stroke={BD} strokeWidth=".6" />
        <path d="M228 961V975M226 963 228 960 230 963" fill="none" stroke="#444" strokeWidth="1.200" />
        <path d="M191 982V990H220V982" fill="none" stroke="#c4c4c4" strokeWidth="2" />
        <path d="M227 951H243V955L237 961V991H234V961L227 955Z" fill="#606060" />
      </svg>
      <button aria-label="Timeline settings" className="mt-2 ml-auto">
        <Gear />
      </button>
    </footer>
  );
}

export default function App() {
  return (
    <div className="flex h-screen flex-col overflow-hidden bg-white font-['Liberation_Sans',Arial,sans-serif]">
      <TitleBar />
      <Ribbon />
      <main className="relative min-h-0 flex-1">
        <Scene />
        <div className="relative flex h-full flex-col justify-between">
          <div className="flex items-start justify-between">
            <Browser />
            <ViewCube />
          </div>
          <div className="grid grid-cols-[1fr_auto_1fr] items-end pb-1.5 pl-[3px]">
            <PanelBar title="COMMENTS" open={false} />
            <NavBar />
          </div>
        </div>
      </main>
      <Timeline />
    </div>
  );
}
